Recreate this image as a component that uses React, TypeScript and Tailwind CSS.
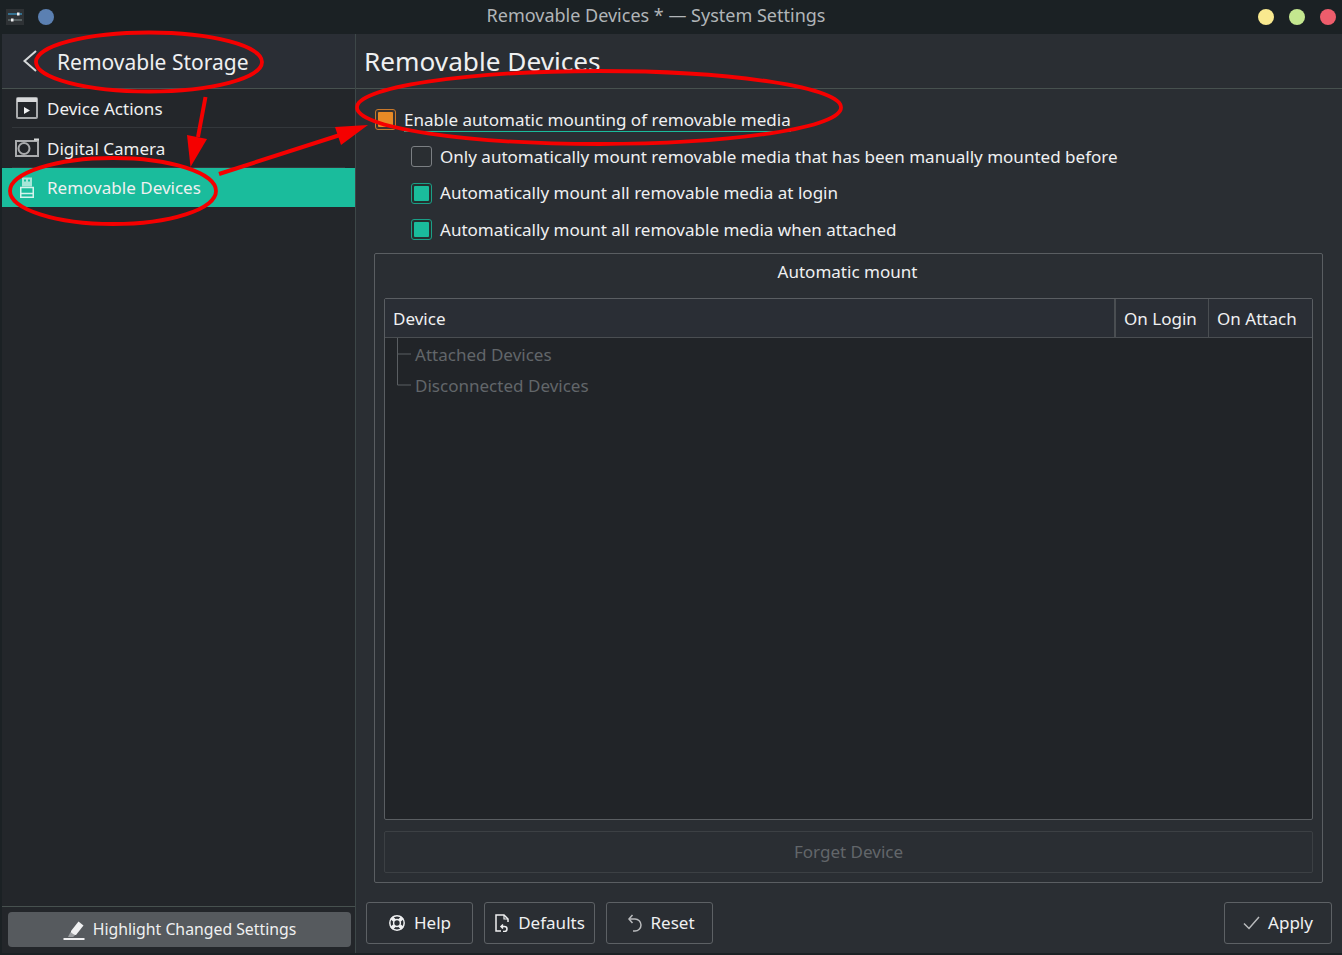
import { ReactNode } from 'react';

const CheckBox = ({ state }: { state: 'on' | 'off' | 'partial' }) => {
  if (state === 'partial') {
    return (
      <span className="flex h-[21px] w-[21px] shrink-0 items-center justify-center rounded-[3px] border border-[#c9782a] bg-[#3a3330]">
        <span className="h-[15px] w-[15px] rounded-[1px] bg-[#e88a26]" />
      </span>
    );
  }
  if (state === 'on') {
    return (
      <span className="flex h-[21px] w-[21px] shrink-0 items-center justify-center rounded-[3px] border border-[#1a9f87] bg-[#26302f]">
        <span className="h-[15px] w-[15px] rounded-[1px] bg-[#1abc9c]" />
      </span>
    );
  }
  return <span className="h-[21px] w-[21px] shrink-0 rounded-[3px] border border-[#7b7f83] bg-[#2a2e32]" />;
};

const FooterButton = ({ icon, label, width }: { icon: ReactNode; label: string; width: string }) => (
  <button className={`flex h-[42px] items-center justify-center gap-[8px] rounded-[3px] border border-[#5d6165] text-[#eff0f1] ${width}`}>
    {icon}
    <span>{label}</span>
  </button>
);

const SideItem = ({ icon, label, active, height, textClass }: { icon: ReactNode; label: string; active?: boolean; height: string; textClass?: string }) => (
  <div className={`flex items-center pl-[13px] text-[#eff0f1] ${height} ${active ? 'bg-[#1abc9c]' : ''}`}>
    <span className="flex w-[32px] shrink-0 items-center">{icon}</span>
    <span className={textClass}>{label}</span>
  </div>
);

const Annotations = () => (
  <svg className="absolute inset-0 pointer-events-none" width="1342" height="955" viewBox="0 0 1342 955" fill="none">
    <ellipse cx="149" cy="62" rx="113" ry="29.5" stroke="#f50000" strokeWidth="3.8" />
    <ellipse cx="113" cy="191" rx="103" ry="33" stroke="#f50000" strokeWidth="3.8" />
    <ellipse cx="599" cy="107.5" rx="242" ry="36.5" stroke="#f50000" strokeWidth="3.8" />
    <path d="M205.5 97L198 137" stroke="#f50000" strokeWidth="4" />
    <path d="M190.5 167L187 135L207 139Z" fill="#f50000" />
    <path d="M219 174L340 135" stroke="#f50000" strokeWidth="4" />
    <path d="M368 125L335 127L341 145Z" fill="#f50000" />
  </svg>
);

export default function App() {
  return (
    <div className="relative flex h-[955px] w-[1342px] flex-col overflow-hidden bg-[#1b2124] font-['Noto_Sans',sans-serif] text-[17.04px] leading-none">
      {/* Title bar */}
      <div className="relative flex h-[34px] shrink-0 items-center justify-between pl-[6px] pr-[6px]">
        <div className="flex items-center gap-[14px]">
          <svg width="18" height="16" viewBox="0 0 18 16">
            <rect width="18" height="16" fill="#2e3235" />
            <path d="M2 5h14" stroke="#3daee9" strokeWidth="1" />
            <rect x="11" y="3.5" width="2.5" height="3" fill="#eff0f1" />
            <path d="M2 11h14" stroke="#7f8c8d" strokeWidth="1" />
            <rect x="5" y="9.5" width="2.5" height="3" fill="#eff0f1" />
          </svg>
          <span className="h-[16px] w-[16px] rounded-full bg-[#5b80b2]" />
        </div>
        <span className="absolute left-[312px] top-[6px] w-[688px] text-center text-[18px] text-[#b1b5b8]">Removable Devices * — System Settings</span>
        <div className="flex items-center gap-[15px]">
          <span className="h-[16px] w-[16px] rounded-full bg-[#f9e98f]" />
          <span className="h-[16px] w-[16px] rounded-full bg-[#c4e78f]" />
          <span className="h-[16px] w-[16px] rounded-full bg-[#ee5d6c]" />
        </div>
      </div>

      <div className="flex h-[919px] shrink-0 pl-[2px]">
        {/* Sidebar */}
        <div className="flex w-[353px] shrink-0 flex-col bg-[#23262a]">
          <div className="flex h-[55px] shrink-0 items-center border-b border-[#47514f] bg-[#2a2e35] pl-[20px] text-[21px] text-[#eff0f1]">
            <svg width="16" height="24" viewBox="0 0 16 24" fill="none" className="mr-[19px]">
              <path d="M14 2L2.5 12L14 22" stroke="#d6d8da" strokeWidth="2" />
            </svg>
            <span className="pt-[2px]">Removable Storage</span>
          </div>
          <SideItem
            height="h-[38px]"
            label="Device Actions"
            textClass="pt-[2px]"
            icon={
              <svg width="22" height="22" viewBox="0 0 22 22" fill="none" className="ml-[1px]">
                <rect x="1" y="1" width="20" height="20" rx="1" stroke="#a9abad" strokeWidth="2" />
                <rect x="1" y="1" width="20" height="4" fill="#d8d9da" />
                <path d="M8 10v7l6-3.5z" fill="#eff0f1" />
              </svg>
            }
          />
          <div className="mx-[10px] h-[1px] bg-[#33373b]" />
          <SideItem
            height="h-[39px]"
            label="Digital Camera"
            textClass="pt-[2px]"
            icon={
              <svg width="24" height="20" viewBox="0 0 24 20" fill="none">
                <path d="M1 3h22v15H1z" stroke="#a9abad" strokeWidth="2" />
                <circle cx="9" cy="10.5" r="5.5" stroke="#a9abad" strokeWidth="2" />
                <rect x="19" y="0.5" width="5" height="2" fill="#d8d9da" />
              </svg>
            }
          />
          <div className="mx-[10px] h-[1px] bg-[#33373b]" />
          <SideItem
            active
            height="h-[39px]"
            label="Removable Devices"
            icon={
              <svg width="14" height="21" viewBox="0 0 14 21" fill="none" className="ml-[5px]">
                <path d="M2 0.5h10v9H2z" fill="#a6e6d8" />
                <path d="M4 2.5h2v2H4zM8 2.5h2v2H8z" fill="#1abc9c" />
                <path d="M0.75 10.5h12.5v9.75H0.75z" stroke="#d5f3ec" strokeWidth="1.5" />
                <path d="M1 16.5h12" stroke="#d5f3ec" strokeWidth="1.5" />
              </svg>
            }
          />
          <div className="flex-1" />
          <div className="flex h-[47px] shrink-0 items-start border-t border-[#47514f] pl-[6px] pt-[5px]">
            <button className="flex h-[35px] w-[343px] shrink-0 items-center justify-center gap-[8px] rounded-[4px] bg-[#565a5e] text-[15.8px] text-[#eff0f1]">
              <svg width="22" height="22" viewBox="0 0 22 22" fill="none">
                <path d="M8 12L15.5 2.5L20.5 6.5L13 16L8 15.5Z" fill="#eff0f1" />
                <path d="M7.5 13L5 18H10L12 16.5Z" fill="#9a9da0" />
                <rect x="0.5" y="19" width="21" height="2" fill="#eff0f1" />
              </svg>
              <span>Highlight Changed Settings</span>
            </button>
          </div>
        </div>

        {/* Main panel */}
        <div className="flex flex-1 flex-col border-l border-[#3d4748] bg-[#2a2e33]">
          <div className="flex h-[55px] shrink-0 items-center border-b border-[#47514f] pl-[8px] text-[26.2px] text-[#eff0f1]">
            Removable Devices
          </div>
          <div className="flex flex-col pl-[19px] pt-[20px] text-[#eff0f1]">
            <label className="flex h-[21px] items-center gap-[8px]">
              <CheckBox state="partial" />
              <span className="relative">
                Enable automatic mounting of removable media
                <span className="absolute -bottom-[4px] left-0 right-0 h-[1px] bg-[#1abc9c]" />
              </span>
            </label>
            <label className="mt-[16px] ml-[36px] flex h-[21px] items-center gap-[8px]">
              <CheckBox state="off" />
              <span>Only automatically mount removable media that has been manually mounted before</span>
            </label>
            <label className="mt-[16px] ml-[36px] flex h-[21px] items-center gap-[8px]">
              <CheckBox state="on" />
              <span className="pb-[2px]">Automatically mount all removable media at login</span>
            </label>
            <label className="mt-[15px] ml-[36px] flex h-[21px] items-center gap-[8px]">
              <CheckBox state="on" />
              <span>Automatically mount all removable media when attached</span>
            </label>
          </div>

          {/* Group box */}
          <div className="ml-[18px] mt-[13px] flex h-[630px] w-[949px] shrink-0 flex-col rounded-[2px] border border-[#5a5e62] px-[9px]">
            <div className="flex h-[44px] shrink-0 items-center justify-center pb-[8px] pr-[2px] text-[#eff0f1]">Automatic mount</div>
            <div className="flex h-[522px] shrink-0 flex-col rounded-[2px] border border-[#5a5e62] bg-[#212428]">
              <div className="flex h-[39px] shrink-0 items-center border-b border-[#4a4e52] bg-[#2a2e35] text-[#eff0f1]">
                <div className="flex h-full flex-1 items-center pl-[8px] pt-[1px]">Device</div>
                <div className="flex h-full w-[94px] items-center border-l-2 border-[#4a4e52] pl-[8px] pt-[1px]">On Login</div>
                <div className="flex h-full w-[104px] items-center border-l border-[#4a4e52] pl-[8px] pt-[1px]">On Attach</div>
              </div>
              <div className="relative pl-[30px] pt-[1px] text-[#62666a]">
                <svg className="absolute left-[11px] top-0" width="18" height="48" viewBox="0 0 18 48" fill="none">
                  <path d="M1.5 0V47H15M1.5 16H15" stroke="#5a5e62" strokeWidth="1" />
                </svg>
                <div className="flex h-[31px] items-center">Attached Devices</div>
                <div className="flex h-[31px] items-center">Disconnected Devices</div>
              </div>
            </div>
            <button className="mt-[11px] flex h-[42px] shrink-0 items-center justify-center rounded-[2px] border border-[#3c4044] text-[#62666a]">
              Forget Device
            </button>
          </div>

          {/* Footer buttons */}
          <div className="flex items-start justify-between pl-[10px] pr-[10px] pt-[19px]">
            <div className="flex gap-[11px]">
              <FooterButton
                width="w-[107px]"
                label="Help"
                icon={
                  <svg width="18" height="18" viewBox="0 0 18 18" fill="none">
                    <circle cx="9" cy="9" r="7.2" stroke="#eff0f1" strokeWidth="1.5" />
                    <circle cx="9" cy="9" r="3.4" stroke="#eff0f1" strokeWidth="1.5" />
                    <path d="M3.5 3.5l3 3M14.5 3.5l-3 3M3.5 14.5l3-3M14.5 14.5l-3-3" stroke="#eff0f1" strokeWidth="3.6" />
                  </svg>
                }
              />
              <FooterButton
                width="w-[111px]"
                label="Defaults"
                icon={
                  <svg width="16" height="18" viewBox="0 0 16 18" fill="none">
                    <path d="M14 8V5L10 1H2v16h5" stroke="#eff0f1" strokeWidth="1.5" />
                    <path d="M10 1v4h4" stroke="#eff0f1" strokeWidth="1.2" />
                    <path d="M9 10.5l-2 2 2 2M7.5 12.5h3a2.5 2.5 0 010 5H9" stroke="#eff0f1" strokeWidth="1.5" />
                  </svg>
                }
              />
              <FooterButton
                width="w-[107px] pl-[4px]"
                label="Reset"
                icon={
                  <svg width="14" height="18" viewBox="0 0 14 18" fill="none">
                    <path d="M4.5 1L1 5l3.5 4" stroke="#b9bbbd" strokeWidth="1.5" />
                    <path d="M1 5h6a5.5 5.5 0 010 12H5" stroke="#b9bbbd" strokeWidth="1.5" />
                  </svg>
                }
              />
            </div>
            <FooterButton
              width="w-[108px]"
              label="Apply"
              icon={
                <svg width="17" height="14" viewBox="0 0 17 14" fill="none">
                  <path d="M1 7.5l5 5L16 1" stroke="#b9bbbd" strokeWidth="1.5" />
                </svg>
              }
            />
          </div>
        </div>
      </div>
      <Annotations />
    </div>
  );
}
